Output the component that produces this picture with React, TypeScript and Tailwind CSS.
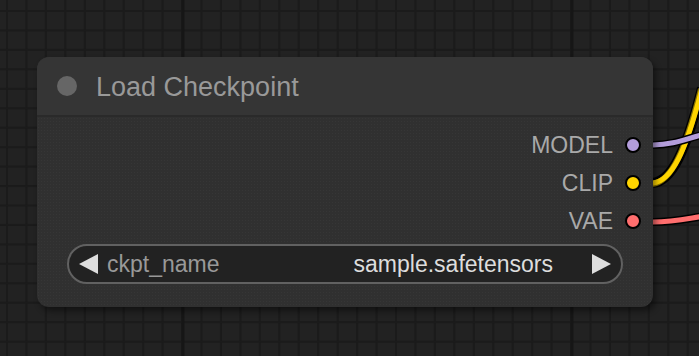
import React from "react";

const STEP = 19.45;

function Canvas() {
  const vLines = Array.from({ length: 37 }, (_, i) => 7 + i * STEP);
  const hLines = Array.from({ length: 19 }, (_, i) => 11 + i * STEP);
  return (
    <svg className="absolute inset-0" width={699} height={356} viewBox="0 0 699 356">
      <rect width={699} height={356} fill="#222222" />
      {vLines.map((x, i) => (
        <rect key={"v" + i} x={x - 1} y={0} width={2} height={356} fill="#1b1b1b" />
      ))}
      {hLines.map((y, i) => (
        <rect key={"h" + i} x={0} y={y - 1} width={699} height={2} fill="#1b1b1b" />
      ))}
      <rect x={181.5} y={0} width={3} height={356} fill="#161616" />
      <rect x={570.5} y={0} width={3} height={356} fill="#161616" />
      {/* wires */}
      <g fill="none" strokeLinecap="butt">
        <path d="M653 183 C672 181 686 151 702 88" stroke="#000" strokeWidth={10} />
        <path d="M653 183 C672 181 686 151 702 88" stroke="#8a7400" strokeWidth={6} transform="translate(-1 1)" />
        <path d="M653 183 C672 181 686 151 702 88" stroke="#FFD500" strokeWidth={5} />
        <path d="M653 145 C675 144.5 685 139 705 134" stroke="#000" strokeWidth={8} />
        <path d="M653 145 C675 144.5 685 139 705 134" stroke="#B39DDB" strokeWidth={5} />
        <path d="M653 222 C675 222 690 218 705 216" stroke="#000" strokeWidth={8} />
        <path d="M653 222 C675 222 690 218 705 216" stroke="#FF6E6E" strokeWidth={5} />
      </g>
    </svg>
  );
}

function Output({ label, color }: { label: string; color: string }) {
  return (
    <div className="h-[38px] flex items-center gap-[12px]">
      <span className="text-[23px] leading-none text-[#a9a9a9]">{label}</span>
      <span
        className="w-[16px] h-[16px] rounded-full border-[2px] border-black"
        style={{ backgroundColor: color }}
      />
    </div>
  );
}

export default function App() {
  return (
    <div
      className="relative w-[699px] h-[356px] overflow-hidden bg-[#222222]"
      style={{ fontFamily: '"Liberation Sans", Arial, sans-serif' }}
    >
      <Canvas />
      <div className="absolute left-[37px] top-[57px] w-[616px] h-[250px] rounded-[12px] bg-[#303030] shadow-[3px_4px_6px_rgba(0,0,0,0.45)] flex flex-col overflow-hidden">
        <div className="h-[60px] shrink-0 bg-[#353535] border-b-2 border-[#2a2a2a] flex items-center pl-[20px] gap-[19px]">
          <span className="w-[20px] h-[20px] rounded-full bg-[#666666]" />
          <span className="text-[27px] leading-none text-[#999999] pt-[2px]">Load Checkpoint</span>
        </div>
        <div className="flex-1 flex flex-col bg-[radial-gradient(#363636_0.6px,transparent_0.6px)] bg-[length:3px_3px]">
          <div className="flex flex-col items-end pr-[12px] pt-[9px]">
            <Output label="MODEL" color="#B39DDB" />
            <Output label="CLIP" color="#FFD500" />
            <Output label="VAE" color="#FF6E6E" />
          </div>
          <div className="mx-[30px] mt-[4px] h-[40px] rounded-full border-2 border-[#616161] bg-[#222222] flex items-center px-[10px]">
            <svg width={20} height={20} viewBox="0 0 20 20" className="shrink-0">
              <polygon points="19,0 19,20 0,10" fill="#dddddd" />
            </svg>
            <span className="ml-[8px] text-[23px] leading-none text-[#999999]">ckpt_name</span>
            <span className="ml-auto mr-[38px] text-[23px] leading-none text-[#dddddd]">sample.safetensors</span>
            <svg width={20} height={20} viewBox="0 0 20 20" className="shrink-0">
              <polygon points="1,0 1,20 20,10" fill="#dddddd" />
            </svg>
          </div>
        </div>
      </div>
    </div>
  );
}
